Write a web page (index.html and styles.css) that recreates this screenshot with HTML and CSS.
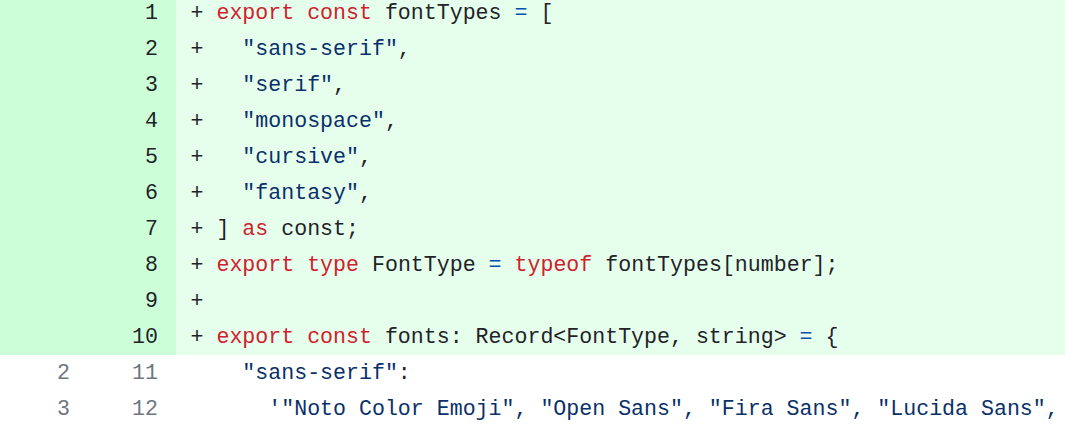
FILE: index.html
```html
<!DOCTYPE html>
<html>
<head>
<meta charset="utf-8">
<link rel="stylesheet" href="styles.css">
</head>
<body>
<div class="diff">
  <div class="row add"><span class="num"></span><span class="num">1</span><span class="code">+ <span class="k">export</span> <span class="k">const</span> fontTypes <span class="o">=</span> [</span></div>
  <div class="row add"><span class="num"></span><span class="num">2</span><span class="code">+   <span class="s">"sans-serif"</span>,</span></div>
  <div class="row add"><span class="num"></span><span class="num">3</span><span class="code">+   <span class="s">"serif"</span>,</span></div>
  <div class="row add"><span class="num"></span><span class="num">4</span><span class="code">+   <span class="s">"monospace"</span>,</span></div>
  <div class="row add"><span class="num"></span><span class="num">5</span><span class="code">+   <span class="s">"cursive"</span>,</span></div>
  <div class="row add"><span class="num"></span><span class="num">6</span><span class="code">+   <span class="s">"fantasy"</span>,</span></div>
  <div class="row add"><span class="num"></span><span class="num">7</span><span class="code">+ ] <span class="k">as</span> const;</span></div>
  <div class="row add"><span class="num"></span><span class="num">8</span><span class="code">+ <span class="k">export</span> <span class="k">type</span> FontType <span class="o">=</span> <span class="k">typeof</span> fontTypes[number];</span></div>
  <div class="row add"><span class="num"></span><span class="num">9</span><span class="code">+ </span></div>
  <div class="row add"><span class="num"></span><span class="num">10</span><span class="code">+ <span class="k">export</span> <span class="k">const</span> fonts: Record&lt;FontType, string&gt; <span class="o">=</span> {</span></div>
  <div class="row ctx"><span class="num">2</span><span class="num">11</span><span class="code">    <span class="s">"sans-serif"</span>:</span></div>
  <div class="row ctx"><span class="num">3</span><span class="num">12</span><span class="code">      <span class="s">'"Noto Color Emoji", "Open Sans", "Fira Sans", "Lucida Sans",</span></span></div>
</div>
</body>
</html>
```
FILE: styles.css
```css
html, body {
  margin: 0;
  padding: 0;
  background: #ffffff;
  overflow: hidden;
}
.diff {
  margin-top: -5px;
  font-family: "Liberation Mono", monospace;
  font-size: 21.6px;
  line-height: 36px;
  color: #1f2328;
}
.row {
  display: grid;
  grid-template-columns: 88px 88px 1fr;
  height: 36px;
}
.num {
  text-align: right;
  padding-right: 18px;
  color: #6e7781;
}
.code {
  white-space: pre;
  overflow: hidden;
  padding-left: 14.5px;
}
.add .num {
  background: #ccffd8;
  color: #1f2328;
}
.add .code {
  background: #e6ffec;
}
.k { color: #cf222e; }
.s { color: #0a3069; }
.o { color: #0550ae; }
```
